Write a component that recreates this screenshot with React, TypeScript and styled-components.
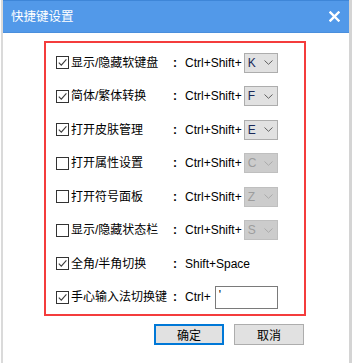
import React from 'react'
import styled, { createGlobalStyle } from 'styled-components'

const GlobalStyle = createGlobalStyle`
  html, body {
    margin: 0;
    padding: 0;
    background: #ffffff;
  }
  body {
    font-family: "Liberation Sans", "Noto Sans CJK SC", sans-serif;
    font-size: 12px;
    color: #000;
  }
`

type Shortcut = {
  label: string
  checked: boolean
  kind: 'select' | 'text' | 'input'
  prefix: string
  value: string
  disabled?: boolean
}

const shortcuts: Shortcut[] = [
  { label: '显示/隐藏软键盘', checked: true, kind: 'select', prefix: 'Ctrl+Shift+', value: 'K' },
  { label: '简体/繁体转换', checked: true, kind: 'select', prefix: 'Ctrl+Shift+', value: 'F' },
  { label: '打开皮肤管理', checked: true, kind: 'select', prefix: 'Ctrl+Shift+', value: 'E' },
  { label: '打开属性设置', checked: false, kind: 'select', prefix: 'Ctrl+Shift+', value: 'C', disabled: true },
  { label: '打开符号面板', checked: false, kind: 'select', prefix: 'Ctrl+Shift+', value: 'Z', disabled: true },
  { label: '显示/隐藏状态栏', checked: false, kind: 'select', prefix: 'Ctrl+Shift+', value: 'S', disabled: true },
  { label: '全角/半角切换', checked: true, kind: 'text', prefix: 'Shift+Space', value: '' },
  { label: '手心输入法切换键', checked: true, kind: 'input', prefix: 'Ctrl+', value: "'" },
]

const App = () => {
  return (
    <>
      <GlobalStyle />
      <Page>
        <Window>
          <TitleBar>
            <Title>快捷键设置</Title>
            <CloseIcon width="11" height="11" viewBox="0 0 11 11">
              <path d="M1.5 1.5 L9.5 9.5 M9.5 1.5 L1.5 9.5" stroke="#fff" strokeWidth="2.4" strokeLinecap="square" />
            </CloseIcon>
          </TitleBar>
          <Body>
            <Group>
              {shortcuts.map((s) => (
                <Row key={s.label}>
                  <Option>
                    <Checkbox>
                      {s.checked && (
                        <svg width="11" height="11" viewBox="0 0 11 11">
                          <polyline points="1.8,5.6 4.3,8.2 9.4,2.4" fill="none" stroke="#3c3c3c" strokeWidth="1.1" />
                        </svg>
                      )}
                    </Checkbox>
                    <Label>{s.label}</Label>
                  </Option>
                  <Colon>:</Colon>
                  <Keys>
                    <KeyText>{s.prefix}</KeyText>
                    {s.kind === 'select' && (
                      <Select $disabled={!!s.disabled}>
                        <SelectValue>{s.value}</SelectValue>
                        <svg width="9" height="5" viewBox="0 0 9 5">
                          <polyline points="0.5,0.5 4.5,4.3 8.5,0.5" fill="none" stroke={s.disabled ? '#aaaaaa' : '#606060'} strokeWidth="1" />
                        </svg>
                      </Select>
                    )}
                    {s.kind === 'input' && <KeyInput>{s.value}</KeyInput>}
                  </Keys>
                </Row>
              ))}
            </Group>
            <Footer>
              <Button $primary>确定</Button>
              <Button>取消</Button>
            </Footer>
          </Body>
        </Window>
      </Page>
    </>
  )
}

export default App

const Page = styled.div`
  width: 352px;
  height: 363px;
  padding-left: 1px;
  box-sizing: border-box;
  background: #fff;
  overflow: hidden;
`

const Window = styled.div`
  height: 100%;
  border-left: 2px solid #dadada;
  border-right: 3px solid #d4d4d4;
  box-sizing: border-box;
`

const TitleBar = styled.div`
  height: 33px;
  box-sizing: border-box;
  background: #5299e9;
  border-top: 1px solid #3e86d8;
  border-bottom: 1px solid #4a8fdd;
  display: flex;
  align-items: center;
  justify-content: space-between;
  padding: 0 9px 0 8px;
`

const Title = styled.span`
  color: #fff;
  font-family: "Noto Sans CJK SC", sans-serif;
  font-size: 12.5px;
  line-height: 1;
`

const CloseIcon = styled.svg`
  display: block;
`

const Body = styled.div`
  padding: 8px 0 0 41px;
  display: flex;
  flex-direction: column;
  align-items: flex-start;
`

const Group = styled.div`
  width: 262px;
  box-sizing: border-box;
  border: 2px solid #f43c3c;
  padding: 3px 0 0 10px;
  display: flex;
  flex-direction: column;
`

const Row = styled.div`
  height: 33.5px;
  display: grid;
  grid-template-columns: 117px 12px 1fr;
  align-items: center;
`

const Option = styled.div`
  display: flex;
  align-items: center;
  gap: 2px;
`

const Checkbox = styled.span`
  width: 13px;
  height: 13px;
  box-sizing: border-box;
  border: 1px solid #333;
  background: #fff;
  display: flex;
  align-items: center;
  justify-content: center;
`

const Label = styled.span`
  font-size: 12px;
  line-height: 1;
  white-space: nowrap;
`

const Colon = styled.span`
  font-weight: bold;
  font-size: 12px;
  line-height: 1;
`

const Keys = styled.div`
  display: flex;
  align-items: center;
  gap: 2px;
`

const KeyText = styled.span`
  font-size: 12px;
  line-height: 1;
  white-space: nowrap;
`

const Select = styled.div<{ $disabled: boolean }>`
  width: 34px;
  height: 20px;
  box-sizing: border-box;
  border: 1px solid ${(p) => (p.$disabled ? '#bfbfbf' : '#adadad')};
  background: ${(p) => (p.$disabled ? '#cccccc' : '#e1e1e1')};
  color: ${(p) => (p.$disabled ? '#9d9d9d' : '#1a2a5a')};
  display: flex;
  align-items: center;
  justify-content: space-between;
  padding: 0 4px 0 3px;
`

const SelectValue = styled.span`
  font-size: 12px;
  line-height: 1;
`

const KeyInput = styled.div`
  width: 63px;
  height: 23px;
  box-sizing: border-box;
  border: 1px solid #7a7a7a;
  background: #fff;
  margin-left: 2px;
  padding: 2px 0 0 3px;
  font-size: 12px;
  line-height: 1;
`

const Footer = styled.div`
  width: 260px;
  margin-top: 8px;
  display: flex;
  justify-content: flex-end;
  gap: 10px;
`

const Button = styled.div<{ $primary?: boolean }>`
  width: 70px;
  height: 21px;
  box-sizing: border-box;
  background: #e1e1e1;
  border: ${(p) => (p.$primary ? '2px solid #0078d7' : '1px solid #adadad')};
  display: flex;
  align-items: center;
  justify-content: center;
  font-family: "Noto Sans CJK SC", sans-serif;
  font-size: 12px;
  line-height: 1;
`
